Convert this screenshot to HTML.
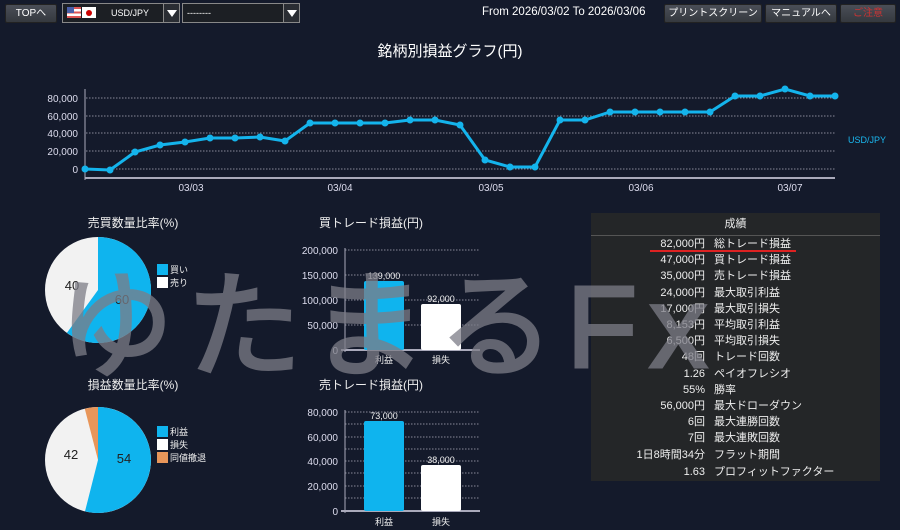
<!DOCTYPE html>
<html><head><meta charset="utf-8"><style>
body{margin:0;width:900px;height:530px;background:#141a2b;overflow:hidden;font-family:"Liberation Sans","Noto Sans CJK JP",sans-serif;color:#fff}
svg{position:absolute;left:0;top:0}
.btn{position:absolute;top:4px;height:17px;background:linear-gradient(#4a4e57,#35393f);border:1px solid #222;color:#fff;font-size:10px;line-height:17px;text-align:center;border-radius:2px}
.sel{position:absolute;top:3px;height:18px;background:#1c1f24;border:1px solid #888;font-size:9px;line-height:18px}
.arr{position:absolute;right:0;top:0;width:15px;height:18px;border-left:1px solid #888;background:#2a2d33}
.arr:after{content:"";position:absolute;left:3px;top:6px;border-left:5px solid transparent;border-right:5px solid transparent;border-top:7px solid #fff}
table{position:absolute;left:591px;top:213px;width:289px;border-collapse:collapse;background:#242628;font-size:11px;color:#eee;white-space:nowrap}
td{height:16.2px;padding:0;line-height:16px}
td.v{text-align:right;padding-right:9px;width:114px}
</style></head><body>
<div class="btn" style="left:5px;width:50px">TOPへ</div>
<div class="sel" style="left:62px;width:116px"><span style="position:absolute;left:4px;top:3px;width:14px;height:11px;background:linear-gradient(#d55 0 20%,#fff 20% 40%,#d55 40% 60%,#fff 60% 80%,#d55 80%)"></span><span style="position:absolute;left:4px;top:3px;width:7px;height:6px;background:#4a5fa8"></span><span style="position:absolute;left:19px;top:3px;width:14px;height:11px;background:#fff"></span><span style="position:absolute;left:23px;top:6px;width:6px;height:6px;border-radius:50%;background:#c00"></span><span style="position:absolute;left:48px">USD/JPY</span><div class="arr"></div></div>
<div class="sel" style="left:182px;width:116px"><span style="position:absolute;left:4px">--------</span><div class="arr"></div></div>
<div style="position:absolute;left:482px;top:6px;font-size:11.5px">From 2026/03/02 To 2026/03/06</div>
<div class="btn" style="left:664px;width:96px">プリントスクリーン</div>
<div class="btn" style="left:765px;width:70px">マニュアルへ</div>
<div class="btn" style="left:840px;width:54px;color:#c33">ご注意</div>
<div style="position:absolute;left:0;width:900px;top:40px;text-align:center;font-size:15px">銘柄別損益グラフ(円)</div>
<svg width="900" height="530" font-family="Liberation Sans, Noto Sans CJK JP, sans-serif">
<g stroke="#889" stroke-dasharray="1.5,1.5" stroke-width="1">
<line x1="86" x2="835" y1="98" y2="98"/><line x1="86" x2="835" y1="116" y2="116"/><line x1="86" x2="835" y1="133" y2="133"/><line x1="86" x2="835" y1="151" y2="151"/><line x1="86" x2="835" y1="169" y2="169"/>
</g>
<line x1="85" y1="89" x2="85" y2="180" stroke="#aab" /><line x1="85" y1="178" x2="835" y2="178" stroke="#aab" stroke-width="2"/>
<g font-size="10" fill="#dde" text-anchor="end"><text x="78" y="102">80,000</text><text x="78" y="120">60,000</text><text x="78" y="137">40,000</text><text x="78" y="155">20,000</text><text x="78" y="173">0</text></g>
<g font-size="10" fill="#dde" text-anchor="middle"><text x="191" y="191">03/03</text><text x="340" y="191">03/04</text><text x="491" y="191">03/05</text><text x="641" y="191">03/06</text><text x="790" y="191">03/07</text></g>
<text x="848" y="143" font-size="9" fill="#1ab8f0">USD/JPY</text>
<polyline fill="none" stroke="#14b4ec" stroke-width="3" points="85,169 110,170 135,152 160,145 185,142 210,138 235,138 260,137 285,141 310,123 335,123 360,123 385,123 410,120 435,120 460,125 485,160 510,167 535,167 560,120 585,120 610,112 635,112 660,112 685,112 710,112 735,96 760,96 785,89 810,96 835,96"/>
<g fill="#14b4ec"><circle cx="85" cy="169" r="3.5"/><circle cx="110" cy="170" r="3.5"/><circle cx="135" cy="152" r="3.5"/><circle cx="160" cy="145" r="3.5"/><circle cx="185" cy="142" r="3.5"/><circle cx="210" cy="138" r="3.5"/><circle cx="235" cy="138" r="3.5"/><circle cx="260" cy="137" r="3.5"/><circle cx="285" cy="141" r="3.5"/><circle cx="310" cy="123" r="3.5"/><circle cx="335" cy="123" r="3.5"/><circle cx="360" cy="123" r="3.5"/><circle cx="385" cy="123" r="3.5"/><circle cx="410" cy="120" r="3.5"/><circle cx="435" cy="120" r="3.5"/><circle cx="460" cy="125" r="3.5"/><circle cx="485" cy="160" r="3.5"/><circle cx="510" cy="167" r="3.5"/><circle cx="535" cy="167" r="3.5"/><circle cx="560" cy="120" r="3.5"/><circle cx="585" cy="120" r="3.5"/><circle cx="610" cy="112" r="3.5"/><circle cx="635" cy="112" r="3.5"/><circle cx="660" cy="112" r="3.5"/><circle cx="685" cy="112" r="3.5"/><circle cx="710" cy="112" r="3.5"/><circle cx="735" cy="96" r="3.5"/><circle cx="760" cy="96" r="3.5"/><circle cx="785" cy="89" r="3.5"/><circle cx="810" cy="96" r="3.5"/><circle cx="835" cy="96" r="3.5"/></g>

<g font-size="12" fill="#eee" text-anchor="middle"><text x="133" y="227">売買数量比率(%)</text><text x="133" y="389">損益数量比率(%)</text><text x="371" y="227">買トレード損益(円)</text><text x="371" y="389">売トレード損益(円)</text></g>
<circle cx="98" cy="290" r="53" fill="#f2f2f2"/>
<path d="M98,290 L98,237 A53,53 0 1 1 66.9,332.9 Z" fill="#0fb4ee"/>
<text x="72" y="290" font-size="13" fill="#222" text-anchor="middle">40</text><text x="122" y="304" font-size="13" fill="#222" text-anchor="middle">60</text>
<rect x="157" y="264" width="11" height="11" fill="#0fb4ee"/><rect x="157" y="277" width="11" height="11" fill="#fff"/>
<text x="170" y="273" font-size="9" fill="#eee">買い</text><text x="170" y="286" font-size="9" fill="#eee">売り</text>
<circle cx="98" cy="460" r="53" fill="#f2f2f2"/>
<path d="M98,460 L98,407 A53,53 0 1 1 85,511.4 Z" fill="#0fb4ee"/>
<path d="M98,460 L84.8,408.7 A53,53 0 0 1 98,407 Z" fill="#e8965a"/>
<text x="71" y="459" font-size="13" fill="#222" text-anchor="middle">42</text><text x="124" y="463" font-size="13" fill="#222" text-anchor="middle">54</text>
<rect x="157" y="426" width="11" height="11" fill="#0fb4ee"/><rect x="157" y="439" width="11" height="11" fill="#fff"/><rect x="157" y="452" width="11" height="11" fill="#e8965a"/>
<text x="170" y="435" font-size="9" fill="#eee">利益</text><text x="170" y="448" font-size="9" fill="#eee">損失</text><text x="170" y="461" font-size="9" fill="#eee">同値撤退</text>
<g stroke="#889" stroke-dasharray="1.5,1.5"><line x1="345" x2="480" y1="250" y2="250"/><line x1="345" x2="480" y1="275" y2="275"/><line x1="345" x2="480" y1="300" y2="300"/><line x1="345" x2="480" y1="325" y2="325"/></g>
<line x1="345" y1="248" x2="345" y2="352" stroke="#aab"/><line x1="341" y1="350" x2="480" y2="350" stroke="#aab" stroke-width="2"/>
<g font-size="10" fill="#dde" text-anchor="end"><text x="338" y="254">200,000</text><text x="338" y="279">150,000</text><text x="338" y="304">100,000</text><text x="338" y="329">50,000</text><text x="338" y="354">0</text></g>
<rect x="364" y="281" width="40" height="69" rx="2" fill="#0fb4ee"/><rect x="421" y="304" width="40" height="46" rx="2" fill="#fff"/>
<g font-size="9" fill="#eee" text-anchor="middle"><text x="384" y="279">139,000</text><text x="441" y="302">92,000</text><text x="384" y="363">利益</text><text x="441" y="363">損失</text></g>
<g stroke="#889" stroke-dasharray="1.5,1.5"><line x1="345" x2="480" y1="412" y2="412"/><line x1="345" x2="480" y1="437" y2="437"/><line x1="345" x2="480" y1="461" y2="461"/><line x1="345" x2="480" y1="486" y2="486"/><line x1="345" x2="480" y1="424" y2="424"/><line x1="345" x2="480" y1="449" y2="449"/><line x1="345" x2="480" y1="473" y2="473"/><line x1="345" x2="480" y1="498" y2="498"/></g>
<line x1="345" y1="410" x2="345" y2="513" stroke="#aab"/><line x1="341" y1="511" x2="480" y2="511" stroke="#aab" stroke-width="2"/>
<g font-size="10" fill="#dde" text-anchor="end"><text x="338" y="416">80,000</text><text x="338" y="441">60,000</text><text x="338" y="465">40,000</text><text x="338" y="490">20,000</text><text x="338" y="515">0</text></g>
<rect x="364" y="421" width="40" height="90" rx="2" fill="#0fb4ee"/><rect x="421" y="465" width="40" height="46" rx="2" fill="#fff"/>
<g font-size="9" fill="#eee" text-anchor="middle"><text x="384" y="419">73,000</text><text x="441" y="463">38,000</text><text x="384" y="525">利益</text><text x="441" y="525">損失</text></g>
</svg>
<table>
<tr><td colspan="2" style="text-align:center;height:22px;border-bottom:1px solid #555">成績</td></tr>
<tr><td class="v">82,000円</td><td>総トレード損益</td></tr>
<tr><td class="v">47,000円</td><td>買トレード損益</td></tr>
<tr><td class="v">35,000円</td><td>売トレード損益</td></tr>
<tr><td class="v">24,000円</td><td>最大取引利益</td></tr>
<tr><td class="v">17,000円</td><td>最大取引損失</td></tr>
<tr><td class="v">8,153円</td><td>平均取引利益</td></tr>
<tr><td class="v">6,500円</td><td>平均取引損失</td></tr>
<tr><td class="v">48回</td><td>トレード回数</td></tr>
<tr><td class="v">1.26</td><td>ペイオフレシオ</td></tr>
<tr><td class="v">55%</td><td>勝率</td></tr>
<tr><td class="v">56,000円</td><td>最大ドローダウン</td></tr>
<tr><td class="v">6回</td><td>最大連勝回数</td></tr>
<tr><td class="v">7回</td><td>最大連敗回数</td></tr>
<tr><td class="v">1日8時間34分</td><td>フラット期間</td></tr>
<tr><td class="v" style="height:18px">1.63</td><td>プロフィットファクター</td></tr>
</table>
<div style="position:absolute;left:650px;top:250px;width:146px;height:2px;background:#d22"></div>
<div style="position:absolute;left:58px;top:262px;font-size:116px;line-height:130px;color:#7d7d87;opacity:0.75;letter-spacing:12px;white-space:nowrap;-webkit-text-stroke:3px #7d7d87;font-family:'Liberation Sans','Noto Sans CJK JP',sans-serif">ゆたまるFx</div>
</body></html>
